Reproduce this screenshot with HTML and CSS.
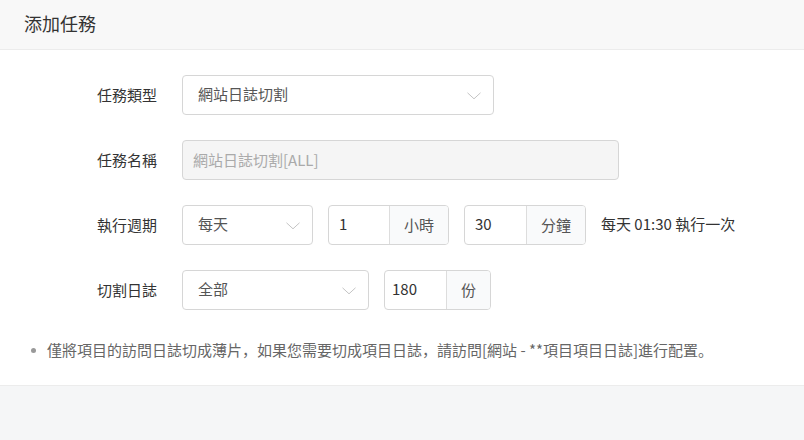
FILE: index.html
```html
<!DOCTYPE html>
<html lang="zh">
<head>
<meta charset="utf-8">
<title>添加任務</title>
<link rel="stylesheet" href="styles.css">
</head>
<body>
<div class="page">
  <div class="header"><span class="title">添加任務</span></div>
  <div class="main">
    <div class="form">
      <div class="row">
        <div class="label">任務類型</div>
        <div class="select w-type"><span class="val">網站日誌切割</span><svg class="arrow" width="14" height="8" viewBox="0 0 14 8"><path d="M0.5 0.8 L7 6.8 L13.5 0.8" fill="none" stroke="#c4c4c4" stroke-width="1"/></svg></div>
      </div>
      <div class="row">
        <div class="label">任務名稱</div>
        <div class="input disabled w-name">網站日誌切割[ALL]</div>
      </div>
      <div class="row">
        <div class="label">執行週期</div>
        <div class="select w-cycle"><span class="val">每天</span><svg class="arrow" width="14" height="8" viewBox="0 0 14 8"><path d="M0.5 0.8 L7 6.8 L13.5 0.8" fill="none" stroke="#c4c4c4" stroke-width="1"/></svg></div>
        <div class="group g-hour"><span class="gval">1</span><span class="addon">小時</span></div>
        <div class="group g-min"><span class="gval">30</span><span class="addon">分鐘</span></div>
        <span class="explain">每天 01:30 執行一次</span>
      </div>
      <div class="row">
        <div class="label">切割日誌</div>
        <div class="select w-log"><span class="val">全部</span><svg class="arrow" width="14" height="8" viewBox="0 0 14 8"><path d="M0.5 0.8 L7 6.8 L13.5 0.8" fill="none" stroke="#c4c4c4" stroke-width="1"/></svg></div>
        <div class="group g-count"><span class="gval">180</span><span class="addon">份</span></div>
      </div>
    </div>
    <ul class="hints">
      <li><span class="dot"></span>僅將項目的訪問日誌切成薄片，如果您需要切成項目日誌，請訪問[網站 - **項目項目日誌]進行配置。</li>
    </ul>
  </div>
  <div class="footer"></div>
</div>
</body>
</html>
```

FILE: styles.css
```css
* { box-sizing: border-box; }
html, body { margin: 0; padding: 0; }
body {
  font-family: "Noto Sans CJK SC", "Noto Sans CJK TC", sans-serif;
  font-size: 15px;
  color: #333;
  background: #f5f6f7;
}
.page { width: 804px; }
.header {
  height: 50px;
  background: #f8f8f8;
  border-bottom: 1px solid #ececec;
  padding-left: 24px;
  display: flex;
  align-items: center;
}
.title { font-size: 18px; color: #333; line-height: 24px; margin-top: -3px; }
.main {
  background: #fff;
  padding: 25px 0 25px 0;
  border-bottom: 1px solid #ececec;
}
.form { display: flex; flex-direction: column; gap: 25px; }
.row { display: flex; align-items: center; height: 40px; }
.label {
  width: 182px;
  padding-right: 25px;
  text-align: right;
  color: #333;
  line-height: 20px;
}
.select, .input, .group {
  height: 40px;
  border: 1px solid #d6d6d6;
  border-radius: 4px;
  background: #fff;
  line-height: 20px;
}
.select {
  display: flex;
  align-items: center;
  justify-content: space-between;
  padding: 0 12px 0 15px;
  color: #555;
}
.select .val { margin-top: -2px; }
.arrow { display: block; margin-top: 1px; }
.w-type { width: 312px; }
.w-cycle { width: 131px; }
.w-log { width: 187px; }
.input { display: flex; align-items: center; padding: 0 10px; }
.input.disabled { background: #f5f5f5; color: #aaa; }
.w-name { width: 437px; }
.group { display: flex; align-items: stretch; margin-left: 15px; overflow: hidden; }
.gval { display: flex; align-items: center; padding-left: 10px; color: #333; margin-top: -2px; }
.addon {
  display: flex;
  align-items: center;
  justify-content: center;
  background: #f9fafb;
  border-left: 1px solid #ddd;
  color: #555;
}
.g-hour { width: 121px; }
.g-hour .gval { width: 60px; }
.g-hour .addon { width: 59px; }
.g-min { width: 122px; }
.g-min .gval { width: 61px; }
.g-min .addon { width: 59px; }
.g-count { width: 107px; }
.g-count .gval { width: 61px; padding-left: 7px; }
.g-count .addon { width: 44px; }
.explain { margin-left: 15px; color: #333; line-height: 20px; margin-top: -2px; }
.hints {
  list-style: none;
  margin: 30px 0 0 0;
  padding: 0 0 0 31px;
  color: #666;
  line-height: 20px;
}
.hints li { display: flex; align-items: center; }
.dot {
  width: 5px; height: 5px; border-radius: 50%;
  background: #999;
  margin-right: 11px;
  flex: none;
}
.footer { height: 56px; background: #f5f6f7; }
```
